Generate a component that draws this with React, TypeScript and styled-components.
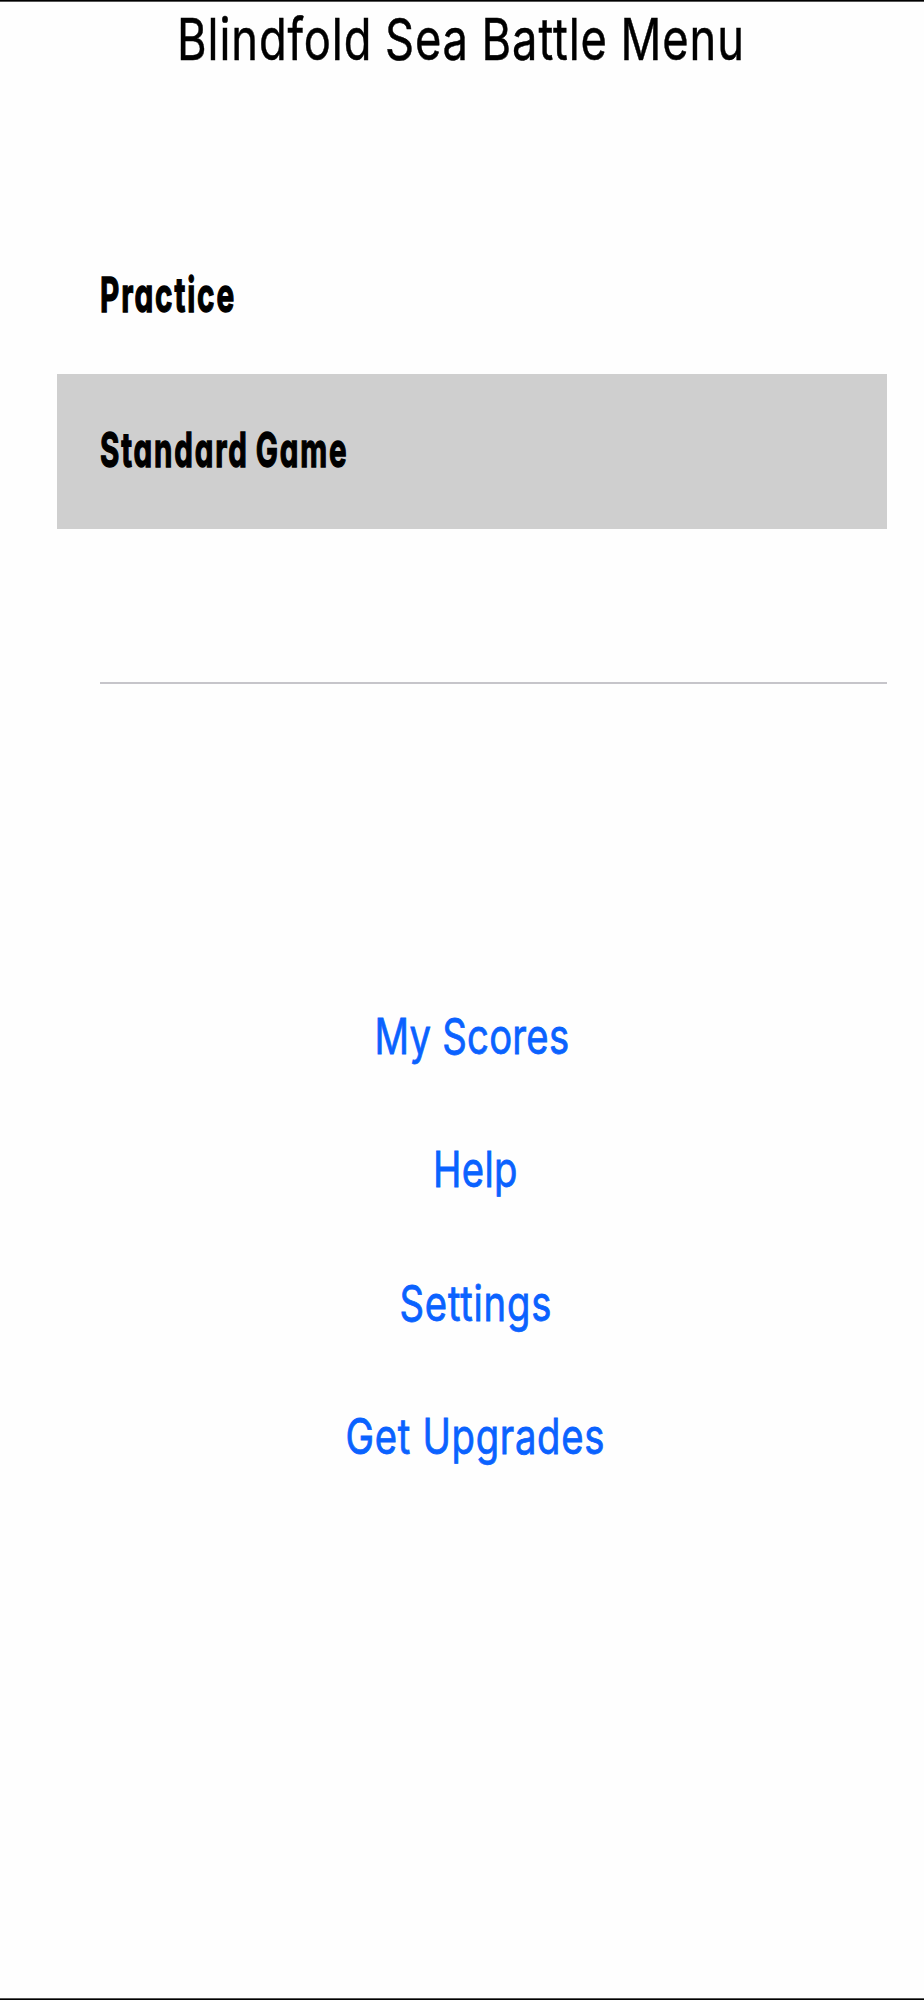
import React from 'react';
import styled, { createGlobalStyle } from 'styled-components';

const GlobalStyle = createGlobalStyle`
  * { box-sizing: border-box; }
  body { margin: 0; background: #fefefe; }
`;

const Screen = styled.main`
  display: flex;
  flex-direction: column;
  width: 924px;
  height: 2000px;
  overflow: hidden;
  background: #fefefe;
  border-top: 1px solid #000;
  border-bottom: 1px solid #000;
  font-family: Inter, 'Liberation Sans', sans-serif;
`;

const EdgeLine = styled.div<{ $bottom?: boolean }>`
  flex: none;
  height: 1px;
  margin-top: ${(p) => (p.$bottom ? 'auto' : '0')};
  background: #555;
`;

const Title = styled.h1`
  flex: none;
  display: flex;
  justify-content: center;
  margin: 0;
  height: 217px;
  padding: 2px 3px 0 0;
  font-size: 58px;
  font-weight: 400;
  line-height: 70px;
  letter-spacing: 1.15px;
  word-spacing: -1.2px;
  color: #000;
  -webkit-text-stroke: 0.5px #000;
`;

const Condensed = styled.span<{ $scale: number; $origin?: string }>`
  display: block;
  flex: none;
  white-space: nowrap;
  height: max-content;
  transform: scaleX(${(p) => p.$scale});
  transform-origin: ${(p) => p.$origin ?? 'center'};
`;

const Modes = styled.ul`
  flex: none;
  list-style: none;
  margin: 0 37px 0 57px;
  padding: 0;
  height: 465px;
`;

const ModeRow = styled.li<{ $selected?: boolean }>`
  display: flex;
  align-items: center;
  height: 155px;
  padding: 0 0 5px 43px;
  background: ${(p) => (p.$selected ? '#cfcfcf' : 'transparent')};
  font-size: 48px;
  font-weight: 700;
  font-feature-settings: 'cv11' 1;
  letter-spacing: 3px;
  word-spacing: -3px;
  color: #000;
  -webkit-text-stroke: 1.4px #000;
`;

const EmptyRow = styled.li`
  height: 155px;
  margin-left: 43px;
  border-bottom: 2px solid #c6c5ca;
`;

const Links = styled.nav`
  display: flex;
  flex-direction: column;
  align-items: center;
  margin-top: 286px;
  padding-left: 27px;
`;

const MenuLink = styled.a<{ $nudge?: number; $spacing: number }>`
  display: flex;
  align-items: center;
  justify-content: center;
  height: 133.5px;
  padding-right: ${(p) => p.$nudge ?? 0}px;
  font-size: 49px;
  font-weight: 400;
  line-height: 60px;
  letter-spacing: ${(p) => p.$spacing}px;
  color: #0a62ff;
  -webkit-text-stroke: 0.8px #0a62ff;
`;

const modes = [
  { label: 'Practice', scale: 0.62 },
  { label: 'Standard Game', scale: 0.615, selected: true },
];

const links = [
  { label: 'My Scores', spacing: 0.35, nudge: 8 },
  { label: 'Help', spacing: 0.5 },
  { label: 'Settings', spacing: 1 },
  { label: 'Get Upgrades', spacing: 0.9 },
];

export default function App() {
  return (
    <>
      <GlobalStyle />
      <Screen>
        <EdgeLine />
        <Title>
          <Condensed $scale={0.78}>Blindfold Sea Battle Menu</Condensed>
        </Title>
        <Modes>
          {modes.map((m) => (
            <ModeRow key={m.label} $selected={m.selected}>
              <Condensed $scale={m.scale} $origin="left center">
                {m.label}
              </Condensed>
            </ModeRow>
          ))}
          <EmptyRow />
        </Modes>
        <Links>
          {links.map((l) => (
            <MenuLink key={l.label} $spacing={l.spacing} $nudge={l.nudge}>
              <Condensed $scale={0.78}>{l.label}</Condensed>
            </MenuLink>
          ))}
        </Links>
        <EdgeLine $bottom />
      </Screen>
    </>
  );
}
